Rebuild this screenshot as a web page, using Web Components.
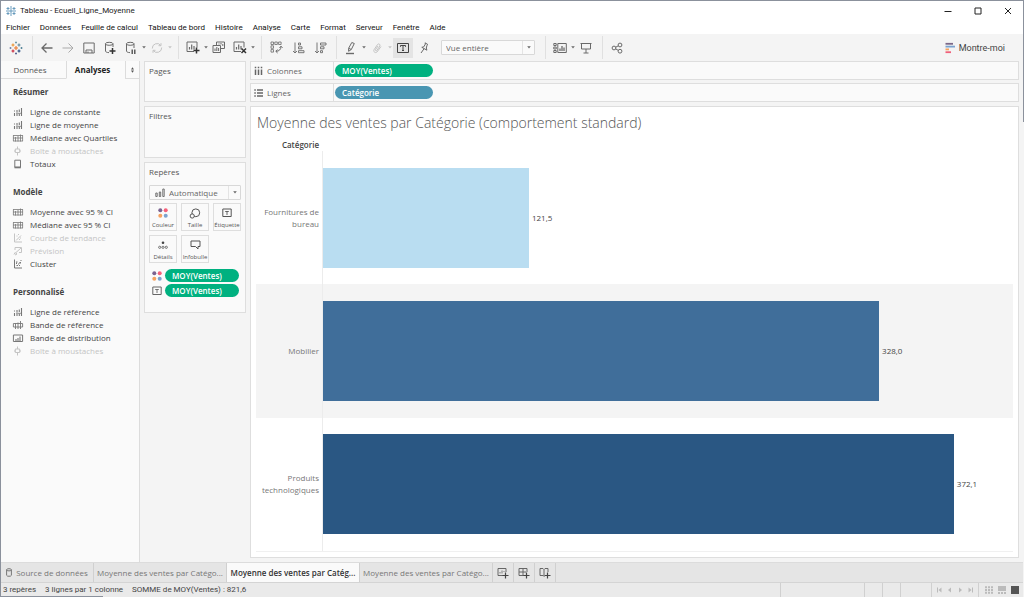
<!DOCTYPE html>
<html lang="fr">
<head>
<meta charset="utf-8">
<title>Tableau - Ecueil_Ligne_Moyenne</title>
<style>
  html, body { margin: 0; height: 100%; }
  body { font: 8px/12px "Open Sans", "Noto Sans", sans-serif; color: #4b4b4b; background: #f4f4f4; }
</style>
</head>
<body>
<wb-app></wb-app>
<script>
const ICONS = {
  app: [12, 12, '<g stroke="#5b93b8" fill="none"><path d="M6 1v10M1 6h10M3 2v3M9 2v3M3 7v3M9 7v3M1.500 3.500h3M7.500 3.500h3M1.500 8.500h3M7.500 8.500h3" stroke-width=".9"/></g>'],
  logo: [14, 14, '<g stroke-width="1.100" fill="none"><path d="M7 5v4M5 7h4" stroke="#e8762c"/><path d="M4 2.500v3M2.500 4h3" stroke="#eb912c"/><path d="M10 2.500v3M8.500 4h3" stroke="#5b879b"/><path d="M4 8.500v3M2.500 10h3" stroke="#c72035"/><path d="M10 8.500v3M8.500 10h3" stroke="#1f447e"/><path d="M7 .5v2M6 1.500h2" stroke="#7199a6"/><path d="M7 11.500v2M6 12.500h2" stroke="#5c6692"/><path d="M1.500 6v2M.5 7h2" stroke="#7b83a8"/><path d="M12.500 6v2M11.500 7h2" stroke="#59879b"/></g>'],
  back: [12, 12, '<path d="M11.500 6H1M5.500 1.500 1 6l4.500 4.500" stroke-width="1.300"/>'],
  forward: [12, 12, '<path d="M.5 6H11M6.500 1.500 11 6l-4.500 4.500"/>'],
  save: [12, 12, '<path d="M.8 1h10.400v10H.8z"/><path d="M3 11V8h6v3M5 9.500v1.500"/>'],
  dbadd: [12, 14, '<path d="M9 6V2.800M1.500 2.800v7.200c0 1 1.500 1.600 3.500 1.600"/><ellipse cx="5.200" cy="2.800" rx="3.800" ry="1.500"/><path d="M8.500 7v6M5.500 10h6" stroke="#333" stroke-width="1.500"/>'],
  dbpause: [12, 14, '<path d="M9 7V2.800M1.500 2.800v7.200c0 1 1.500 1.600 3.500 1.600"/><ellipse cx="5.200" cy="2.800" rx="3.800" ry="1.500"/><path d="M7.200 8.500v4.500M9.800 8.500v4.500" stroke="#444" stroke-width="1.300"/>'],
  caret: [4, 3, '<path d="M.2.300h3.600L2 2.500z" fill="currentColor" stroke="none"/>'],
  refresh: [12, 12, '<path d="M1.300 6.500a4.700 4.700 0 0 1 8.500-3M10.700 5.500a4.700 4.700 0 0 1-8.500 3M10 1.200v2.500H7.500M2 10.800V8.300h2.500"/>'],
  sheetadd: [14, 13, '<path d="M8 10.500H1V1h10v5.500"/><path d="M3.500 8.500V6M5.700 8.500V3.500M8 8.500V5" stroke-width="1.200"/><path d="M10.500 6.500v6M7.500 9.500h6" stroke="#333" stroke-width="1.500"/>'],
  duplicate: [14, 13, '<path d="M4.500 4.500V1h8v6.500h-4"/><path d="M1 4.500h7.500v7H1z"/><path d="M3 10V7.500M4.800 10V6M6.600 10V7M7 3.500V2.500M9 3.500v-1.500M10.800 5V3"/>'],
  clear: [14, 13, '<path d="M8 10.500H1V1h10v5.500"/><path d="M3.500 8.500V6M5.700 8.500V3.500M8 8.500V5" stroke-width="1.200"/><path d="m8.500 7.500 4.500 4.500m0-4.500L8.500 12" stroke="#333" stroke-width="1.500"/>'],
  swap: [13, 13, '<path d="M1 1h2.500v2.500H1zM4.800 1h2.500v2.500H4.800zM8.600 1h2.500v2.500H8.600zM1 4.800h2.500v2.500H1zM1 8.600h2.500v2.500H1z" stroke-width=".8"/><path d="M11 5.500c0 3-2 4.800-5 4.800M9.500 6.800 11 5.200l1.500 1.600M7.600 8.500 5.800 10.300l1.800 1.700"/>'],
  sortasc: [13, 12, '<path d="M3 .5v10.500M1 9l2 2 2-2M6.500 1h2v2h-2zM6.500 4.800h3.500v2H6.500zM6.500 8.700H12v2H6.500z" stroke-width=".9"/>'],
  sortdesc: [13, 12, '<path d="M3 .5v10.500M1 9l2 2 2-2M6.500 1H12v2H6.500zM6.500 4.800h3.500v2H6.500zM6.500 8.700h2v2h-2z" stroke-width=".9"/>'],
  pen: [12, 14, '<path d="M6.800 1.500 9.300 2.500 6.300 8.500 3.600 10.300 3.600 7.300zM3.800 7.300l2.500 1.200"/><path d="M1 12.500h8" stroke-width="1.400"/>'],
  clip: [12, 12, '<path d="M10 4.500 6 10c-1.500 1.500-4-.2-3-2.200L6.500 2.500c1-1.400 3.200 0 2.400 1.500L5.800 8.500c-.7.8-1.800 0-1.300-.9L7 4"/>'],
  label: [14, 12, '<path d="M1.500 1.500h11v9h-11z"/><path d="M4.500 4.800V3.500h5v1.300M7 3.500v5M6 8.500h2"/>'],
  pin: [12, 12, '<path d="M7 .8 9.800 2.500 9 3.200 8.300 6l.6 2.200L3.800 5.300l2-.5L7.400 2zM6 6.800 3 11"/>'],
  cards: [14, 12, '<path d="M.8 1.500h2.400v2H.8zM.8 5h2.400v2H.8zM.8 8.500h2.400v2H.8zM4.800 1.500h8.500v9H4.800z"/><path d="M7 9V6.500M9 9V4M11 9V5.500" stroke-width="1.300"/>'],
  present: [12, 12, '<path d="M.5 1.500h11M1.500 1.500V7h9V1.500M6 7v4M3.500 11h5"/>'],
  share: [12, 12, '<circle cx="3" cy="6" r="1.900"/><circle cx="9" cy="3" r="1.900"/><circle cx="9" cy="9.200" r="1.900"/><path d="m4.700 5.200 2.500-1.300M4.700 6.900l2.500 1.400"/>'],
  showme: [10, 12, '<g stroke-width="1.800"><path d="M.5 1.800h7.500" stroke="#7b6888"/><path d="M.5 4.600H10" stroke="#7ba3cf"/><path d="M.5 7.400H4" stroke="#f7a35c"/><path d="M.5 10.200H6" stroke="#f0607a"/></g>'],
  minimize: [8, 8, '<path d="M.5 4.500h7"/>'],
  maximize: [8, 8, '<path d="M1 1h6v6H1z"/>'],
  close: [8, 8, '<path d="m1 1 6 6M7 1 1 7"/>'],
  updown: [5, 6, '<path d="M2.500.200 4 2.500H1zM2.500 5.800 1 3.500h3z" fill="currentColor" stroke="none"/>'],
  line: [10, 10, '<path d="M1.500 9V6M1.500 4.500v-1M4 9V7M4 5.500V3M6.300 9V6.500M6.300 5V2.500M8.500 9V1" stroke-width="1.100"/><path d="M3 6.300h6" stroke-width=".8"/>'],
  quart: [10, 10, '<path d="M0 2.500h10M0 5h10M0 8h10M2.500 8.500V4M5 8.500V3M7.500 8.500V1.500M9.600 2.500V8M.4 2.500V8" stroke-width=".8"/>'],
  box: [10, 10, '<path d="M4.500.5v2.500M4.500 7v2.500M1 5h1.500M6.500 5H8"/><path d="M2.300 3h4.400v3.500H2.300z"/>'],
  total: [10, 10, '<path d="M1.800 1.200h5.700v7H1.800z"/><path d="M1.500 8.500h6.300" stroke-width="1.600"/>'],
  scatter: [10, 10, '<path d="M1.500.5v8.500H9"/><path d="M3 7.500 8 2.500M3.500 3h1M6 6.500h1M7 5h1M5 1.500h1"/>'],
  forecast: [10, 10, '<path d="M2 4V1.500h6.500v5H6M8 2 3 6.500M1 8.500l1-2 2 1.500-2 1"/>'],
  cluster: [10, 10, '<path d="M1.500.5v8.500H9"/><path d="M3 3h1.500M3.500 6.500H5M6.500 3.500H8M6 6.500h1M5 5h1M7.500 1.500h1M3.500 5V3.500M7 3.500V5"/>'],
  band: [10, 10, '<path d="M.4 3.500h9.200v3.500H.4zM2.500 9V3M5 9V2.500M7.500 9V1" stroke-width=".9"/>'],
  dist: [10, 10, '<path d="M.4 2h9.200v6.500H.4z"/><path d="M3 8V6M5 8V5M7 8V3.500" stroke-width="1.100"/>'],
  columns: [9, 10, '<path d="M1.500 3.500V9M4.500 3.500V9M7.500 3.500V9M1.500.8v1.500M4.500.8v1.500M7.500.8v1.500" stroke-width="1.500"/>'],
  rows: [9, 8, '<path d="M3 1h6M3 4h6M3 7h6M.3 1h1.500M.3 4h1.500M.3 7h1.500" stroke-width="1.300"/>'],
  auto: [10, 10, '<path d="M.8 5h1.400v3.500H.8zM4.300 4h1.400v4.500H4.300zM7.800 1h1.400v7.500H7.800z" stroke-width=".9"/>'],
  dots: [10, 10, '<g stroke="none"><circle cx="2.300" cy="2.300" r="2" fill="#7b6390"/><circle cx="7.700" cy="2.300" r="2" fill="#f5617a"/><circle cx="2.300" cy="7.700" r="2" fill="#f7a25f"/><circle cx="7.700" cy="7.700" r="2" fill="#7ba3cf"/></g>'],
  size: [12, 11, '<circle cx="6.800" cy="4.800" r="3.900"/><circle cx="3.200" cy="8" r="2.100" fill="#fafafa"/>'],
  tlabel: [10, 10, '<path d="M.8 1h8.400v7.500H.8z"/><path d="M3.200 3.500h3.600M5 3.500v3.500" stroke-width=".9"/>'],
  detail: [10, 10, '<circle cx="5" cy="2.800" r="1.300" fill="#444" stroke="none"/><circle cx="1.700" cy="7.300" r="1.100" stroke-width=".8"/><circle cx="5" cy="7.300" r="1.100" stroke-width=".8"/><circle cx="8.300" cy="7.300" r="1.100" stroke-width=".8"/>'],
  tooltip: [11, 10, '<path d="M1 1h9v5.500H8V9L5.500 6.500H1z"/>'],
  db: [6, 9, '<ellipse cx="3" cy="1.800" rx="2.400" ry="1.100"/><path d="M.6 1.800v5.500c0 1.300 4.800 1.300 4.800 0V1.800"/>'],
  tabsheet: [12, 12, '<path d="M6 8.500H1v-7h8V5"/><path d="M3 6.500V5M5 6.500V3.500M7 5V4" stroke-width=".8"/><path d="M8.500 5.500v6M5.500 8.500h6" stroke="#444" stroke-width="1.200"/>'],
  tabdash: [12, 12, '<path d="M6 8.500H1v-7h8V5M1 5h7M5 1.500v7"/><path d="M8.500 5.500v6M5.500 8.500h6" stroke="#444" stroke-width="1.200"/>'],
  tabstory: [12, 12, '<path d="M5.500 9.500 4 8.500H1v-7h3l1 1 1-1h3V5M5 2.500v6"/><path d="M8.500 5.500v6M5.500 8.500h6" stroke="#444" stroke-width="1.200"/>'],
  first: [5, 6, '<path d="M.5.500v5"/><path d="M4.500.500v5L1.500 3z" fill="currentColor" stroke="none"/>'],
  prev: [5, 6, '<path d="M4 .5v5L1 3z" fill="currentColor" stroke="none"/>'],
  next: [5, 6, '<path d="M1 .5v5L4 3z" fill="currentColor" stroke="none"/>'],
  last: [5, 6, '<path d="M4.500.500v5"/><path d="M.5.500v5l3-2.500z" fill="currentColor" stroke="none"/>'],
  grid: [8, 8, '<path d="M0 1.300h8M0 4h8M0 6.700h8" stroke-width="1.900" stroke-dasharray="2 1"/>'],
  film: [8, 8, '<path d="M0 2.500h8" stroke-width="5"/><path d="M0 7h8" stroke-width="2" stroke-dasharray="2 1"/>'],
  full: [8, 8, '<path d="M0 0h8v8H0z" fill="currentColor" stroke="none"/>'],
};

function define(name, html, setup) {
  const template = document.createElement('template');
  template.innerHTML = html;
  customElements.define(name, class extends HTMLElement {
    constructor() {
      super();
      this.attachShadow({ mode: 'open' }).append(template.content.cloneNode(true));
    }
    connectedCallback() {
      if (setup) setup(this, this.shadowRoot);
    }
  });
}

function fillIcon(root, name) {
  const icon = document.createElement('wb-icon');
  icon.setAttribute('name', name);
  root.querySelector('.icon').replaceChildren(icon);
}

const RESET = `:host,*{box-sizing:border-box}
  button,select{font:inherit;color:inherit;background:none;border:0;margin:0;padding:0;border-radius:0;appearance:none}
  button{display:flex;align-items:center;justify-content:center;white-space:nowrap}`;

define('wb-icon', `<style>:host{display:inline-flex;flex:none} svg{display:block;overflow:visible}</style>`, (el, root) => {
  const [w, h, body] = ICONS[el.getAttribute('name')];
  root.querySelector('svg')?.remove();
  root.append(document.createRange().createContextualFragment(
    `<svg width="${w}" height="${h}" viewBox="0 0 ${w} ${h}" fill="none" stroke="currentColor" aria-hidden="true">${body}</svg>`));
});

define('wb-titlebar', `<style>${RESET}
  :host{display:flex;align-items:center;height:19px;padding-left:4px;color:#222;background:#fff;font-family:Roboto,sans-serif}
  h1{font:inherit;margin:0 auto 0 3px}
  button{width:30px;height:19px;color:#222}
</style>
<wb-icon name="app"></wb-icon><h1>Tableau - Ecueil_Ligne_Moyenne</h1>
<button aria-label="Réduire"><wb-icon name="minimize"></wb-icon></button>
<button aria-label="Agrandir"><wb-icon name="maximize"></wb-icon></button>
<button aria-label="Fermer"><wb-icon name="close"></wb-icon></button>`);

define('wb-menubar', `<style>${RESET}
  :host{display:block;background:#fff;color:#111;font-family:Roboto,sans-serif}
  nav{display:flex;gap:10px;height:14px;padding:2px 0 0 5px}
</style>
<nav><button>Fichier</button><button>Données</button><button>Feuille de calcul</button><button>Tableau de bord</button><button>Histoire</button><button>Analyse</button><button>Carte</button><button>Format</button><button>Serveur</button><button>Fenêtre</button><button>Aide</button></nav>`);

define('wb-tool', `<style>${RESET}
  :host{display:block;color:#6a6a6a}
  :host([off]){color:#c4c4c4}
  :host([soft]){color:#aaa}
  :host([on]){background:#e4e4e4;color:#444}
  button{width:20px;height:20px}
  :host([drop]) button{width:4px}
</style><button class="icon"></button>`, (el, root) => {
  root.querySelector('button').setAttribute('aria-label', el.getAttribute('label') || 'Options');
  fillIcon(root, el.getAttribute('icon'));
});

define('wb-select', `<style>${RESET}
  :host{display:flex;align-items:center;height:15px;border:1px solid #d8d8d8;border-radius:1px;background:#fafafa;color:#666}
  ::slotted(wb-icon){margin-left:5px}
  select{flex:1;min-width:0;height:13px;padding-left:4px}
  span{display:flex;align-items:center;justify-content:center;width:12px;height:13px;border-left:1px solid #e4e4e4}
</style><slot></slot><select><option></option></select><span><wb-icon name="caret"></wb-icon></span>`, (el, root) => {
  root.querySelector('option').textContent = el.getAttribute('value');
  root.querySelector('select').setAttribute('aria-label', el.getAttribute('label'));
});

define('wb-toolbar', `<style>${RESET}
  :host{display:flex;align-items:center;height:27px;padding:0 18px 0 5px;background:#f4f4f4}
  .group{display:flex;align-items:center;gap:1px}
  .wide{gap:2px}
  hr{width:1px;height:23px;margin:0 4px 0 6px;border:0;background:#e0e0e0}
  wb-select{width:94px;margin:0 4px 0 6px}
  .show{gap:4px;margin-left:auto;color:#444;font:9px/12px Roboto,sans-serif}
</style>
<div class="group"><wb-tool icon="logo" label="Page de démarrage"></wb-tool></div><hr>
<div class="group"><wb-tool icon="back" label="Annuler"></wb-tool><wb-tool soft icon="forward" label="Rétablir"></wb-tool><wb-tool icon="save" label="Enregistrer"></wb-tool><wb-tool icon="dbadd" label="Nouvelle source"></wb-tool><wb-tool icon="dbpause" label="Suspendre"></wb-tool><wb-tool drop icon="caret"></wb-tool><wb-tool off icon="refresh" label="Actualiser"></wb-tool><wb-tool off drop icon="caret"></wb-tool></div><hr>
<div class="group"><wb-tool icon="sheetadd" label="Nouvelle feuille"></wb-tool><wb-tool drop icon="caret"></wb-tool><wb-tool icon="duplicate" label="Dupliquer"></wb-tool><wb-tool icon="clear" label="Effacer"></wb-tool><wb-tool drop icon="caret"></wb-tool></div><hr>
<div class="group wide"><wb-tool icon="swap" label="Permuter"></wb-tool><wb-tool icon="sortasc" label="Tri croissant"></wb-tool><wb-tool icon="sortdesc" label="Tri décroissant"></wb-tool></div><hr>
<div class="group"><wb-tool icon="pen" label="Surligner"></wb-tool><wb-tool drop icon="caret"></wb-tool><wb-tool off icon="clip" label="Grouper"></wb-tool><wb-tool off drop icon="caret"></wb-tool><wb-tool on icon="label" label="Étiquettes"></wb-tool><wb-tool icon="pin" label="Épingler"></wb-tool><wb-select value="Vue entière" label="Ajuster"></wb-select></div><hr>
<div class="group"><wb-tool icon="cards" label="Fiches"></wb-tool><wb-tool drop icon="caret"></wb-tool><wb-tool icon="present" label="Présentation"></wb-tool></div><hr>
<div class="group"><wb-tool icon="share" label="Partager"></wb-tool></div>
<button class="show"><wb-icon name="showme"></wb-icon>Montre-moi</button>`);

define('wb-group', `<style>${RESET}
  :host{display:block}
  h2{margin:0 0 7px;font-size:8px;line-height:13px;font-weight:700;color:#444}
</style><h2></h2><slot></slot>`, (el, root) => { root.querySelector('h2').textContent = el.getAttribute('heading'); });

define('wb-item', `<style>${RESET}
  :host{display:flex;align-items:center;gap:7px;height:13px;color:#444;white-space:nowrap}
  .icon{display:flex;color:#777}
  :host([off]),:host([off]) .icon{color:#c4c4c4}
</style><span class="icon"></span><slot></slot>`, (el, root) => fillIcon(root, el.getAttribute('icon')));

define('wb-sidebar', `<style>${RESET}
  :host{display:flex;flex-direction:column;background:#fafafa;border-right:1px solid #dcdcdc}
  .tabs{display:grid;grid-template-columns:65px 1fr 14px;height:18px}
  .tabs button{border-bottom:1px solid #dcdcdc;color:#555}
  .tabs [role=tab]{padding-right:7px}
  .tabs button+button{border-left:1px solid #dcdcdc}
  .tabs button[aria-selected=true]{border-bottom-color:transparent;font-weight:700;color:#222}
  .list{display:grid;gap:15px;padding:6px 12px}
</style>
<div class="tabs"><button role="tab" aria-selected="false">Données</button><button role="tab" aria-selected="true">Analyses</button><button aria-label="Options du volet"><wb-icon name="updown"></wb-icon></button></div>
<div class="list">
<wb-group heading="Résumer"><wb-item icon="line">Ligne de constante</wb-item><wb-item icon="line">Ligne de moyenne</wb-item><wb-item icon="quart">Médiane avec Quartiles</wb-item><wb-item off icon="box">Boîte à moustaches</wb-item><wb-item icon="total">Totaux</wb-item></wb-group>
<wb-group heading="Modèle"><wb-item icon="quart">Moyenne avec 95 % CI</wb-item><wb-item icon="quart">Médiane avec 95 % CI</wb-item><wb-item off icon="scatter">Courbe de tendance</wb-item><wb-item off icon="forecast">Prévision</wb-item><wb-item icon="cluster">Cluster</wb-item></wb-group>
<wb-group heading="Personnalisé"><wb-item icon="line">Ligne de référence</wb-item><wb-item icon="band">Bande de référence</wb-item><wb-item icon="dist">Bande de distribution</wb-item><wb-item off icon="box">Boîte à moustaches</wb-item></wb-group>
</div>`);

define('wb-pill', `<style>
  :host{display:block;box-sizing:border-box;height:13px;padding:0 7px;border-radius:7px;background:#00b180;color:#fff;font-weight:600;line-height:13px;white-space:nowrap}
  :host([blue]){background:#4996b2}
</style><slot></slot>`);

define('wb-card', `<style>${RESET}
  :host{display:block;padding:3px 4px;border:1px solid #dedede;background:#fafafa}
  h2{margin:0;font-size:8px;line-height:12px;font-weight:400;color:#555}
</style><h2></h2><slot></slot>`, (el, root) => { root.querySelector('h2').textContent = el.getAttribute('heading'); });

define('wb-mark', `<style>${RESET}
  :host{display:block}
  button{flex-direction:column;justify-content:space-between;width:100%;height:28px;padding:4px 0 1px;border:1px solid #dedede;font-size:6px;line-height:8px;color:#555}
</style><button><slot name="icon"></slot><slot></slot></button>`);

define('wb-cards', `<style>${RESET}
  :host{display:flex;flex-direction:column;gap:4px;padding:0 4px}
  .pages{height:41px} .filters{height:52px} .marks{height:151px}
  wb-select{margin-top:7px}
  .grid{display:grid;grid-template-columns:repeat(3,1fr);gap:4px;margin-top:3px}
  .enc{display:grid;grid-template-columns:10px 74px;align-items:center;justify-content:end;gap:2px 3px;padding-right:2px;margin-top:6px;color:#666}
</style>
<wb-card class="pages" heading="Pages"></wb-card>
<wb-card class="filters" heading="Filtres"></wb-card>
<wb-card class="marks" heading="Repères">
<wb-select value="Automatique" label="Type de repère"><wb-icon name="auto"></wb-icon></wb-select>
<div class="grid"><wb-mark><wb-icon slot="icon" name="dots"></wb-icon>Couleur</wb-mark><wb-mark><wb-icon slot="icon" name="size"></wb-icon>Taille</wb-mark><wb-mark><wb-icon slot="icon" name="tlabel"></wb-icon>Étiquette</wb-mark><wb-mark><wb-icon slot="icon" name="detail"></wb-icon>Détails</wb-mark><wb-mark><wb-icon slot="icon" name="tooltip"></wb-icon>Infobulle</wb-mark></div>
<div class="enc"><wb-icon name="dots"></wb-icon><wb-pill>MOY(Ventes)</wb-pill><wb-icon name="tlabel"></wb-icon><wb-pill>MOY(Ventes)</wb-pill></div>
</wb-card>`);

define('wb-shelf', `<style>${RESET}
  :host{display:grid;grid-template-columns:83px 98px;gap:1px;align-items:center;height:19px;border:1px solid #dedede;background:#fafafa;color:#666}
  .name{display:flex;align-items:center;gap:4px;height:17px;padding-left:3px;border-right:1px solid #dedede}
</style><div class="name"><slot name="icon"></slot><slot name="label"></slot></div><slot></slot>`);

define('wb-bar', `<style>${RESET}
  :host{display:grid;grid-template-columns:66px minmax(0,1fr)}
  .head{display:flex;align-items:center;justify-content:flex-end;padding-right:3px;text-align:right;color:#777}
  .plot{display:flex;align-items:center;gap:3px;border-left:1px solid #ececec;color:#444}
  .fill{height:75%}
</style><div class="head"><slot></slot></div><div class="plot"><div class="fill"></div><span></span></div>`, (el, root) => {
  const value = Number(el.getAttribute('value'));
  const fill = root.querySelector('.fill');
  fill.style.width = `${value / 407 * 100}%`;
  fill.style.background = el.getAttribute('color');
  root.querySelector('span').textContent = value.toFixed(1).replace('.', ',');
});

define('wb-view', `<style>${RESET}
  :host{display:flex;flex-direction:column;padding:6px 5px 5px;border:1px solid #dedede;background:#fff}
  h1{margin:0 1px;font-size:14px;line-height:20px;font-weight:300;color:#555}
  h2{width:66px;margin:6px 0 0;padding-right:3px;font-size:8px;line-height:12px;font-weight:600;text-align:right;color:#444}
  .chart{flex:1;display:grid;grid-template-rows:repeat(3,1fr);border-bottom:1px solid #f0f0f0}
  wb-bar:nth-child(2){background:#f4f4f4}
</style>
<h1>Moyenne des ventes par Catégorie (comportement standard)</h1>
<h2>Catégorie</h2>
<div class="chart"><wb-bar value="121.5" color="#b9ddf1">Fournitures de bureau</wb-bar><wb-bar value="328" color="#406e9a">Mobilier</wb-bar><wb-bar value="372.1" color="#2a5783">Produits technologiques</wb-bar></div>`);

define('wb-canvas', `<style>
  :host{display:flex;flex-direction:column;padding-bottom:4px}
  wb-shelf{margin-bottom:3px}
  wb-view{flex:1;margin-top:1px}
</style>
<wb-shelf><wb-icon slot="icon" name="columns"></wb-icon><span slot="label">Colonnes</span><wb-pill>MOY(Ventes)</wb-pill></wb-shelf>
<wb-shelf><wb-icon slot="icon" name="rows"></wb-icon><span slot="label">Lignes</span><wb-pill blue>Catégorie</wb-pill></wb-shelf>
<wb-view></wb-view>`);

define('wb-tabs', `<style>${RESET}
  :host{display:flex;height:21px;border-top:1px solid #dcdcdc;border-bottom:1px solid #d4d4d4;background:#e5e5e5;color:#777}
  button{gap:4px;width:133px;border-right:1px solid #d0d0d0}
  button[aria-selected=true]{background:#fafafa;font-weight:600;color:#333}
  .source{width:93px}
  .new{width:21px;color:#666}
</style>
<button role="tab" class="source"><wb-icon name="db"></wb-icon>Source de données</button><button role="tab">Moyenne des ventes par Catégo...</button><button role="tab" aria-selected="true">Moyenne des ventes par Catég...</button><button role="tab">Moyenne des ventes par Catégo...</button><button class="new" aria-label="Nouvelle feuille"><wb-icon name="tabsheet"></wb-icon></button><button class="new" aria-label="Nouveau tableau de bord"><wb-icon name="tabdash"></wb-icon></button><button class="new" aria-label="Nouvelle histoire"><wb-icon name="tabstory"></wb-icon></button>`);

define('wb-status', `<style>${RESET}
  :host{display:flex;align-items:center;gap:9px;height:14px;padding:0 3px 0 2px;background:linear-gradient(#8b919c,#8b919c) left bottom/10% 1px no-repeat #eaeaea;color:#444;white-space:nowrap;font-family:Roboto,sans-serif}
  .cells{display:flex;margin-left:auto;height:14px;color:#bbb}
  .cells>*{display:flex;align-items:center;border-left:1px solid #d0d0d0}
  .a{width:84px}.b{width:18px}.c{width:31px}
  .nav{width:47px;justify-content:space-around;padding:0 2px}
  .modes{width:42px;gap:5px;padding-left:6px}
  .on{color:#555}
</style>
<span>3 repères</span><span>3 lignes par 1 colonne</span><span>SOMME de MOY(Ventes) : 821,6</span>
<div class="cells"><div class="a"></div><div class="b"></div><div class="b"></div><div class="c"></div>
<div class="nav"><button aria-label="Première"><wb-icon name="first"></wb-icon></button><button aria-label="Précédente"><wb-icon name="prev"></wb-icon></button><button aria-label="Suivante"><wb-icon name="next"></wb-icon></button><button aria-label="Dernière"><wb-icon name="last"></wb-icon></button></div>
<div class="modes"><button aria-label="Mosaïque"><wb-icon name="grid"></wb-icon></button><button aria-label="Film"><wb-icon name="film"></wb-icon></button><button class="on" aria-label="Onglets"><wb-icon name="full"></wb-icon></button></div></div>`);

define('wb-app', `<style>
  :host{box-sizing:border-box;display:flex;flex-direction:column;min-height:100vh;padding-right:1px;border:solid #8b919c;border-width:1px 0 0 1px;background:linear-gradient(#8b919c,#8b919c) right top/1px 121px no-repeat #f4f4f4}
  main{flex:1;display:grid;grid-template-columns:139px 110px minmax(0,1fr);padding-right:4px}
</style>
<wb-titlebar></wb-titlebar><wb-menubar></wb-menubar><wb-toolbar></wb-toolbar>
<main><wb-sidebar></wb-sidebar><wb-cards></wb-cards><wb-canvas></wb-canvas></main>
<wb-tabs></wb-tabs><wb-status></wb-status>`);
</script>
</body>
</html>
